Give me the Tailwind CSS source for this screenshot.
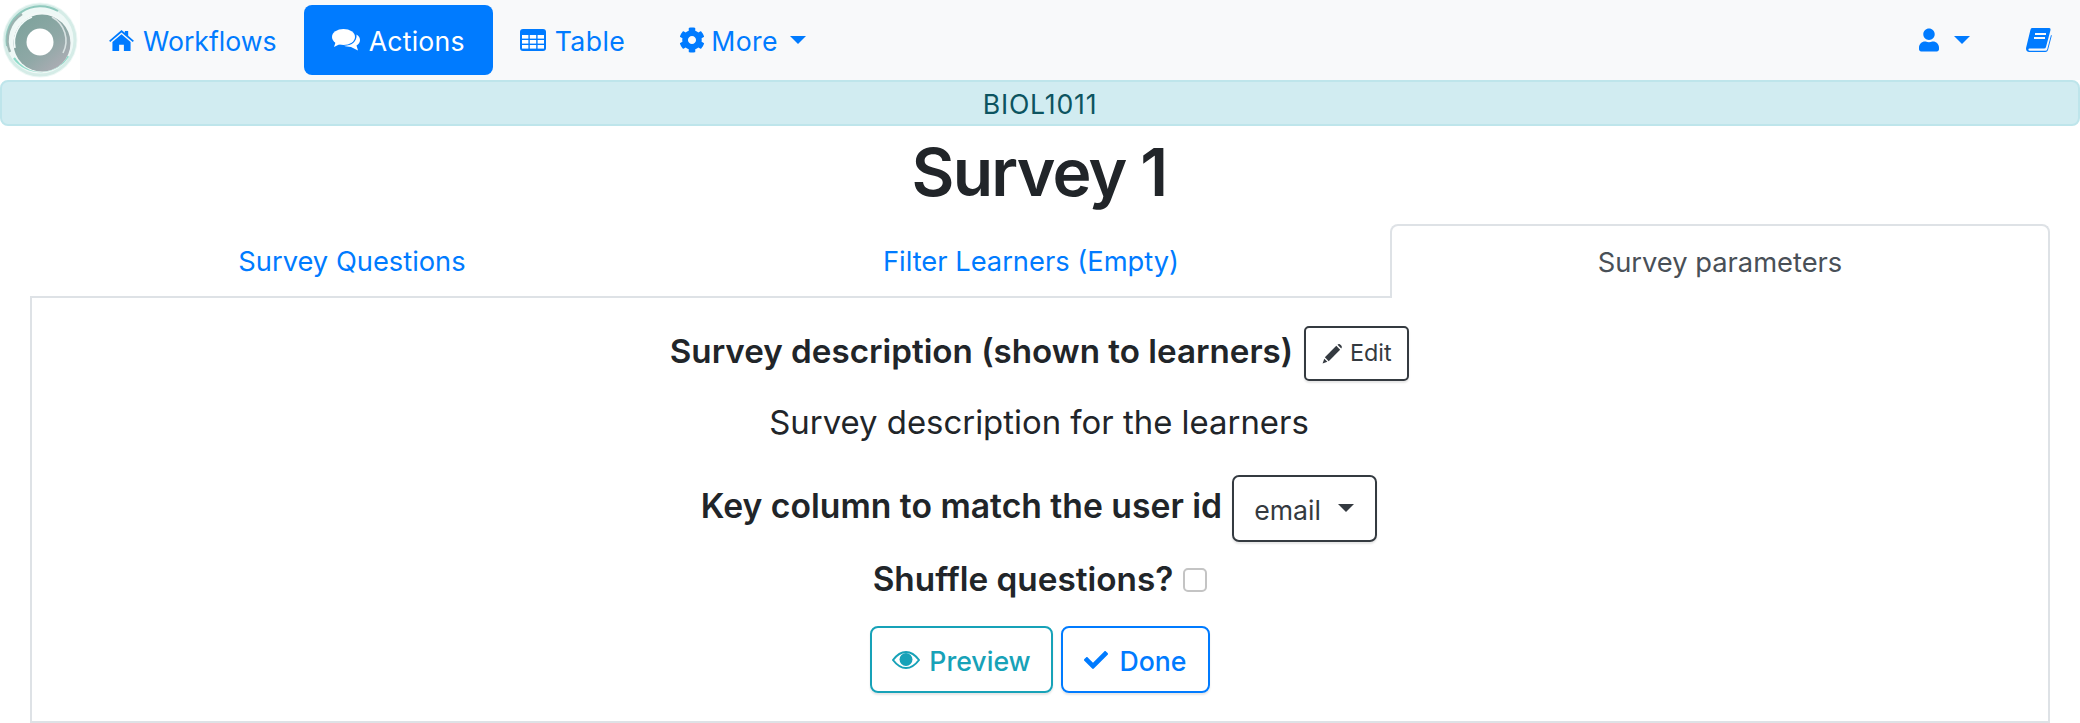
<!DOCTYPE html>
<html lang="en">
<head>
<meta charset="utf-8">
<script src="https://cdn.jsdelivr.net/npm/@tailwindcss/browser@4"></script>
<title>Survey 1</title>
</head>
<body class="bg-white font-['Inter',sans-serif] text-[#212529] overflow-hidden">
<div class="w-[2080px] h-[723px] flex flex-col">
  <nav class="h-20 bg-[#f8f9fa] flex items-center text-[26.67px] text-[#007bff] shrink-0">
    <div class="w-20 h-20 bg-white shrink-0">
      <svg viewBox="0 0 80 80" class="w-20 h-20">
        <defs>
          <linearGradient id="d" x1="0.2" y1="0.1" x2="0.9" y2="0.9">
            <stop offset="0" stop-color="#7fa39d"/>
            <stop offset="0.55" stop-color="#8fa8a6"/>
            <stop offset="1" stop-color="#aeadb5"/>
          </linearGradient>
          <filter id="b" x="-10%" y="-10%" width="120%" height="120%"><feGaussianBlur stdDeviation="0.7"/></filter>
        </defs>
        <g filter="url(#b)">
          <circle cx="40" cy="40" r="37.5" fill="#eef8f6"/>
          <circle cx="40" cy="40" r="35" fill="none" stroke="#d5ece7" stroke-width="3"/>
          <path d="M7 46 A34 34 0 0 1 58 11" fill="none" stroke="#8fc9bd" stroke-width="2"/>
          <path d="M14 58 A33 33 0 0 0 68 56" fill="none" stroke="#8fdcca" stroke-width="2.4"/>
          <path d="M10 52 A31 31 0 0 1 22 14" fill="none" stroke="#9bb3b0" stroke-width="2.4"/>
          <circle cx="41" cy="42" r="30" fill="#f2f8f7"/>
          <circle cx="42" cy="43" r="28.5" fill="url(#d)"/>
          <path d="M15 48 A27 27 0 0 1 32 17" fill="none" stroke="#f3fbfa" stroke-width="1.6"/>
          <path d="M52 17 A27 27 0 0 1 63 53" fill="none" stroke="#d8e2e2" stroke-width="1.6"/>
          <circle cx="40" cy="42" r="13.5" fill="#fff"/>
        </g>
      </svg>
    </div>
    <a class="h-[70px] flex items-center px-[27px] gap-[9px] ml-[2px]">
      <svg viewBox="0 0 26 22" class="w-[25px] h-[21px]" fill="#007bff"><path d="M13 0 L16.5 3 V1 H20 V6 L26 11.2 L24.8 12.6 L13 2.6 L1.2 12.6 L0 11.2 Z"/><path d="M13 4.5 L22.5 12.5 V22 H15.5 V15.5 H10.5 V22 H3.5 V12.5 Z"/></svg>
      <span class="translate-y-px">Workflows</span>
    </a>
    <a class="h-[70px] flex items-center px-[28px] gap-[9px] bg-[#007bff] text-white rounded-lg">
      <svg viewBox="0 0 28 22" class="w-[28px] h-[22px]" fill="#fff"><ellipse cx="11.5" cy="8" rx="11.5" ry="8"/><path d="M4 12 L2 18 L10 14 Z"/><path d="M24.5 5.5 C27 7 28 9 28 11 C28 13.5 26.5 15.5 24.5 16.5 L26 21.5 L19 18 C16.5 18 13.5 17.5 12 16.8 C18.5 17 25.5 13 24.5 5.5 Z"/></svg>
      <span class="translate-y-px tracking-[0.2px]">Actions</span>
    </a>
    <a class="h-[70px] flex items-center px-[27px] gap-[9px]">
      <svg viewBox="0 0 26 22" class="w-[26px] h-[22px]"><rect width="26" height="22" rx="3" fill="#007bff"/><g fill="#fff"><rect x="2" y="6" width="6.4" height="3.6"/><rect x="9.8" y="6" width="6.4" height="3.6"/><rect x="17.6" y="6" width="6.4" height="3.6"/><rect x="2" y="11" width="6.4" height="3.6"/><rect x="9.8" y="11" width="6.4" height="3.6"/><rect x="17.6" y="11" width="6.4" height="3.6"/><rect x="2" y="16" width="6.4" height="3.6"/><rect x="9.8" y="16" width="6.4" height="3.6"/><rect x="17.6" y="16" width="6.4" height="3.6"/></g></svg>
      <span class="translate-y-px tracking-[0.4px]">Table</span>
    </a>
    <a class="h-[70px] flex items-center px-[27px] gap-[6px]">
      <svg viewBox="0 0 512 512" class="w-[26px] h-[26px]" fill="#007bff"><path d="M487.4 315.7l-42.6-24.6c4.3-23.2 4.3-47 0-70.2l42.6-24.6c4.9-2.8 7.1-8.6 5.5-14-11.1-35.6-30-67.8-54.7-94.6-3.8-4.1-10-5.1-14.8-2.3L380.8 110c-17.9-15.4-38.5-27.3-60.8-35.1V25.8c0-5.6-3.9-10.5-9.4-11.7-36.7-8.2-74.3-7.8-109.2 0-5.5 1.2-9.4 6.1-9.4 11.7V75c-22.2 7.9-42.8 19.8-60.8 35.1L88.7 85.5c-4.9-2.8-11-1.9-14.8 2.3-24.7 26.7-43.6 58.9-54.7 94.6-1.7 5.4.6 11.2 5.5 14L67.3 221c-4.3 23.2-4.3 47 0 70.2l-42.6 24.6c-4.9 2.8-7.1 8.6-5.5 14 11.1 35.6 30 67.8 54.7 94.6 3.8 4.1 10 5.1 14.8 2.3l42.6-24.6c17.9 15.4 38.5 27.3 60.8 35.1v49.2c0 5.6 3.9 10.5 9.4 11.7 36.7 8.2 74.3 7.8 109.2 0 5.5-1.2 9.4-6.1 9.4-11.7v-49.2c22.2-7.9 42.8-19.8 60.8-35.1l42.6 24.6c4.9 2.8 11 1.9 14.8-2.3 24.7-26.7 43.6-58.9 54.7-94.6 1.5-5.5-.7-11.3-5.6-14.1zM256 336c-44.1 0-80-35.9-80-80s35.9-80 80-80 80 35.9 80 80-35.9 80-80 80z"/></svg>
      <span class="translate-y-px tracking-[0.4px]">More</span>
      <span class="ml-[6px] w-0 h-0 border-x-[8px] border-x-transparent border-t-[8px] border-t-[#007bff]"></span>
    </a>
    <div class="ml-auto flex items-center gap-[56px] pr-[28px]">
      <span class="flex items-center gap-[15px]">
        <svg viewBox="0 0 448 512" class="w-5 h-6" fill="#007bff"><path d="M224 256c70.7 0 128-57.3 128-128S294.7 0 224 0 96 57.3 96 128s57.3 128 128 128zm89.6 32h-16.7c-22.2 10.2-46.9 16-72.9 16s-50.6-5.8-72.9-16h-16.7C60.2 288 0 348.2 0 422.4V464c0 26.5 21.5 48 48 48h352c26.5 0 48-21.5 48-48v-41.6c0-74.2-60.2-134.4-134.4-134.4z"/></svg>
        <span class="w-0 h-0 border-x-[8px] border-x-transparent border-t-[8px] border-t-[#007bff]"></span>
      </span>
      <svg viewBox="0 0 26 24" class="w-[26px] h-6" fill="#007bff"><path d="M6 0 H23 Q25 0 24.4 2.4 L20 19 Q19.6 20.5 18 20.5 H3.6 Q2.2 20.5 2.4 22 Q2.6 22.8 3.8 22.8 H19.4 Q20.8 22.8 21.2 21.6 L25 7 L25.8 7.6 L22 22 Q21.4 24 19.4 24 H3.4 Q0 24 0 20.6 Q0 19.6 0.4 18.4 L4.4 2 Q4.8 0 6 0 Z"/><rect x="9" y="5" width="11" height="2" fill="#f8f9fa"/><rect x="8" y="9" width="11" height="2" fill="#f8f9fa"/></svg>
    </div>
  </nav>

  <div class="h-[46px] shrink-0 bg-[#d1ecf1] border-2 border-[#bee5eb] rounded-lg flex items-center justify-center text-[26.67px] tracking-[0.8px] text-[#0c5460]"><span class="translate-y-px">BIOL1011</span></div>

  <h1 class="text-center text-[66px] font-semibold tracking-[-1.8px] leading-[80px] mt-[6px] shrink-0 -translate-x-[1px]">Survey 1</h1>

  <div class="mx-[30px] flex flex-col flex-1 min-h-0 mt-[12px]">
    <div class="flex text-[27.3px] h-[74px] shrink-0 text-[#007bff]">
      <a class="flex-auto flex items-center justify-center border-b-2 border-[#dee2e6] pt-[4px] pl-[2px] w-[642px]">Survey Questions</a>
      <a class="flex-auto flex items-center justify-center border-b-2 border-[#dee2e6] pt-[4px] w-[718px]">Filter Learners (Empty)</a>
      <a class="flex-auto flex items-center justify-center border-2 border-b-0 border-[#dee2e6] rounded-t-lg text-[#495057] pt-[3px] w-[660px]">Survey parameters</a>
    </div>
    <div class="flex-1 border-2 border-t-0 border-[#dee2e6] flex flex-col items-center">
      <div class="flex items-center gap-[11px] mt-[26px] h-[58px] -ml-[1px]">
        <span class="text-[33.2px] font-semibold -translate-y-px">Survey description (shown to learners)</span>
        <button class="h-[55px] w-[105px] border-2 border-[#343a40] rounded-[5px] flex items-center justify-center gap-[7px] text-[23.33px] text-[#343a40] shadow-[0_2px_2px_rgba(0,0,0,0.1)]">
          <svg viewBox="0 0 22 22" class="w-[21px] h-[21px]" fill="#343a40"><path d="M15 3 L19 7 L7 19 L3 15 Z"/><path d="M16.2 1.8 Q18 0.4 19.6 2 L20.2 2.6 Q21.6 4.2 20.2 5.8 Z"/><path d="M2.4 16.4 L5.6 19.6 L0.6 21.4 Z"/></svg>
          <span>Edit</span>
        </button>
      </div>
      <p class="text-[32.9px] leading-[48px] mt-[16px] -ml-[2px]">Survey description for the learners</p>
      <div class="flex items-center gap-[10px] mt-[28px] h-[68px] -ml-[2px]">
        <span class="text-[33.7px] font-semibold -translate-y-[2px]">Key column to match the user id</span>
        <button class="h-[67px] w-[145px] border-2 border-[#343a40] rounded-[7px] flex items-center justify-start pl-[20px] gap-[17px] text-[26.67px] text-[#343a40] shadow-[0_2px_2px_rgba(0,0,0,0.1)]">
          <span class="translate-y-[2px]">email</span>
          <span class="w-0 h-0 border-x-[8px] border-x-transparent border-t-[8px] border-t-[#343a40]"></span>
        </button>
      </div>
      <div class="flex items-center gap-[10px] mt-[14px] h-[48px]">
        <span class="text-[33.33px] font-semibold">Shuffle questions?</span>
        <span class="w-6 h-6 rounded-[5px] border-2 border-[#c4c4c4] bg-white shrink-0"></span>
      </div>
      <div class="flex items-center gap-2 mt-[22px]">
        <button class="h-[67px] w-[183px] border-2 border-[#17a2b8] rounded-lg flex items-center justify-center gap-[9px] text-[26.67px] font-medium text-[#17a2b8] shadow-[0_2px_2px_rgba(0,0,0,0.1)]">
          <svg viewBox="0 0 28 18" class="w-[28px] h-[18px]"><path d="M1 9 Q7 1 14 1 Q21 1 27 9 Q21 17 14 17 Q7 17 1 9 Z" fill="none" stroke="#17a2b8" stroke-width="2"/><circle cx="14" cy="8.5" r="6.5" fill="#17a2b8"/></svg>
          <span class="translate-y-px">Preview</span>
        </button>
        <button class="h-[67px] w-[149px] border-2 border-[#007bff] rounded-lg flex items-center justify-center gap-[11px] text-[26.67px] font-medium text-[#007bff] shadow-[0_2px_2px_rgba(0,0,0,0.1)]">
          <svg viewBox="0 0 512 512" class="w-6 h-6" fill="#007bff"><path d="M173.898 439.404l-166.4-166.4c-9.997-9.997-9.997-26.206 0-36.204l36.203-36.204c9.997-9.998 26.207-9.998 36.204 0L192 312.69 432.095 72.596c9.997-9.997 26.207-9.997 36.204 0l36.203 36.204c9.997 9.997 9.997 26.206 0 36.204l-294.4 294.401c-9.998 9.997-26.207 9.997-36.204-.001z"/></svg>
          <span class="translate-y-px">Done</span>
        </button>
      </div>
    </div>
  </div>
</div>
</body>
</html>
